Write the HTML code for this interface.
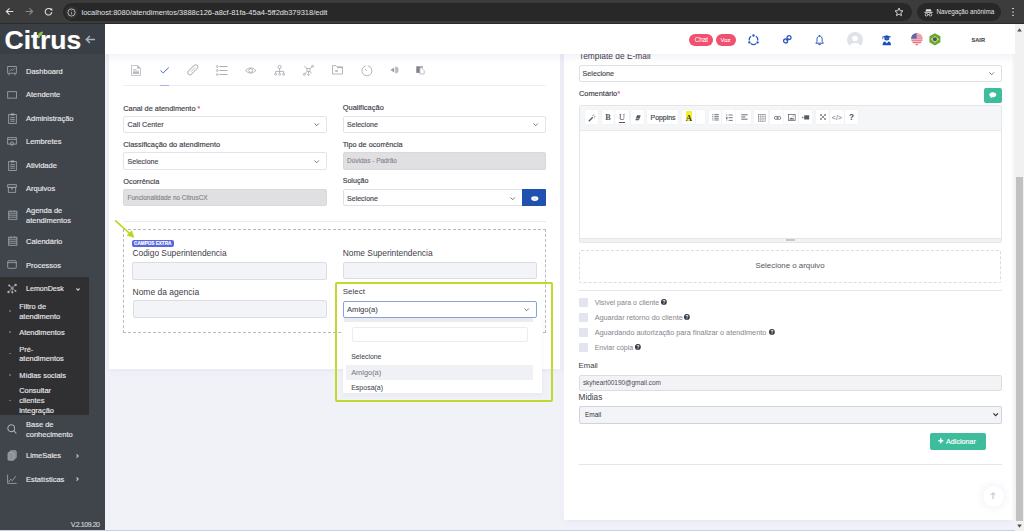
<!DOCTYPE html>
<html><head><meta charset="utf-8">
<style>
*{box-sizing:border-box;margin:0;padding:0}
html,body{width:1024px;height:531px;overflow:hidden;background:#f1f2f8;font-family:"Liberation Sans",sans-serif;position:relative}
.a{position:absolute}
.t{position:absolute;white-space:nowrap;line-height:1;-webkit-text-stroke:0.15px currentColor}
svg.a{overflow:visible}

</style></head><body>
<div class="a" style="left:0px;top:0px;width:1024px;height:24px;background:#3c3c3c"></div>
<div class="a" style="left:0px;top:23px;width:1024px;height:1px;background:#2c2c2c"></div>
<svg class="a" style="left:5px;top:7px;" width="9" height="9" viewBox="0 0 9 9"><path d="M8.3 4.5H1.4M4.5 1.3L1.3 4.5 4.5 7.7" fill="none" stroke="#e0e0e0" stroke-width="1.1"/></svg>
<svg class="a" style="left:24.5px;top:7px;" width="9" height="9" viewBox="0 0 9 9"><path d="M0.7 4.5H7.6M4.5 1.3L7.7 4.5 4.5 7.7" fill="none" stroke="#8a8a8a" stroke-width="1.1"/></svg>
<svg class="a" style="left:44px;top:7px;" width="9" height="9" viewBox="0 0 9 9"><path d="M7.5 3.3A3.3 3.3 0 1 0 7.8 5.2" fill="none" stroke="#e0e0e0" stroke-width="1.1"/><path d="M5.6 1.4L8.3 1.4 8.3 4.1Z" fill="#e0e0e0"/></svg>
<div class="a" style="left:63px;top:3px;width:849px;height:18px;border-radius:9px;background:#282828"></div>
<div class="a" style="left:65px;top:5.5px;width:13px;height:13px;border-radius:7px;background:#323232"></div>
<svg class="a" style="left:67px;top:7.5px;" width="9" height="9" viewBox="0 0 9 9"><circle cx="4.5" cy="4.5" r="3.6" fill="none" stroke="#c8c8c8" stroke-width="0.85"/><path d="M4.5 3.9V6.5" stroke="#b0b0b0" stroke-width="0.8"/><circle cx="4.5" cy="2.7" r="0.45" fill="#b0b0b0"/></svg>
<div class="t" style="left:81.5px;top:8.6px;font-size:7.5px;color:#e3e3e3;-webkit-text-stroke:0">localhost<span>:8080/atendimentos/3888c126-a8cf-81fa-45a4-5ff2db379318/edit</span></div>
<svg class="a" style="left:894px;top:7px;" width="10" height="10" viewBox="0 0 10 10"><path d="M5 1L6.1 3.7 9 3.9 6.8 5.8 7.5 8.7 5 7.1 2.5 8.7 3.2 5.8 1 3.9 3.9 3.7Z" fill="none" stroke="#e0e0e0" stroke-width="0.9" stroke-linejoin="round"/></svg>
<div class="a" style="left:917px;top:3px;width:84px;height:18px;border-radius:9px;background:#282828"></div>
<svg class="a" style="left:924px;top:7.5px;" width="9" height="9" viewBox="0 0 9 9"><path d="M2.2 1.2H6.8L7.6 3.6H1.4Z" fill="#e0e0e0"/><rect x="0.4" y="3.9" width="8.2" height="0.9" fill="#e0e0e0"/><circle cx="2.5" cy="6.7" r="1.3" fill="none" stroke="#e0e0e0" stroke-width="0.85"/><circle cx="6.5" cy="6.7" r="1.3" fill="none" stroke="#e0e0e0" stroke-width="0.85"/><path d="M3.9 6.5H5.1" stroke="#e0e0e0" stroke-width="0.7"/></svg>
<div class="t" style="left:936.5px;top:8.6px;font-size:6.3px;color:#e3e3e3;-webkit-text-stroke:0">Navegação anônima</div>
<div class="a" style="left:1012.2px;top:7.6px;width:1.8px;height:1.8px;border-radius:1px;background:#dcdcdc;box-shadow:0 3.4px 0 #dcdcdc,0 6.8px 0 #dcdcdc"></div>

<div class="a" style="left:0px;top:24px;width:105px;height:507px;background:#40444b"></div>
<div class="a" style="left:0px;top:24px;width:105px;height:30px;background:#3a3e45"></div>
<div class="t" style="left:4.6px;top:26.7px;font-size:26.5px;font-weight:700;color:#fff">Citrus</div>
<svg class="a" style="left:37px;top:31px;" width="6.5" height="6.5" viewBox="0 0 6.5 6.5"><path d="M0.6 6C0.6 3 2.6 0.8 6 0.5 5.9 3.6 4 5.8 0.6 6Z" fill="#8cc63f"/></svg>
<svg class="a" style="left:85px;top:34.5px;" width="10.5" height="9" viewBox="0 0 10.5 9"><path d="M10 4.5H1.3M4.9 1L1.3 4.5 4.9 8" fill="none" stroke="#a7b0bc" stroke-width="1.5"/></svg>
<div class="t" style="left:26.00px;top:67.88px;font-size:7.5px;color:#e6e7ea;font-weight:400;">Dashboard</div>
<div class="t" style="left:26.00px;top:91.18px;font-size:7.5px;color:#e6e7ea;font-weight:400;">Atendente</div>
<div class="t" style="left:26.00px;top:114.78px;font-size:7.5px;color:#e6e7ea;font-weight:400;">Administração</div>
<div class="t" style="left:26.00px;top:138.18px;font-size:7.5px;color:#e6e7ea;font-weight:400;">Lembretes</div>
<div class="t" style="left:26.00px;top:161.97px;font-size:7.5px;color:#e6e7ea;font-weight:400;">Atividade</div>
<div class="t" style="left:26.00px;top:185.18px;font-size:7.5px;color:#e6e7ea;font-weight:400;">Arquivos</div>
<div class="t" style="left:26.00px;top:206.78px;font-size:7.5px;color:#e6e7ea;font-weight:400;">Agenda de</div>
<div class="t" style="left:26.00px;top:216.58px;font-size:7.5px;color:#e6e7ea;font-weight:400;">atendimentos</div>
<div class="t" style="left:26.00px;top:238.08px;font-size:7.5px;color:#e6e7ea;font-weight:400;">Calendário</div>
<div class="t" style="left:26.00px;top:261.77px;font-size:7.5px;color:#e6e7ea;font-weight:400;">Processos</div>
<svg class="a" style="left:7px;top:66px;" width="10" height="10" viewBox="0 0 10 10"><rect x="0.7" y="0.6" width="8.6" height="6.6" fill="none" stroke="#a6aab3" stroke-width="0.8"/><path d="M2.2 5.4L4.2 3.4 5.4 4.4 7.6 2.2" fill="none" stroke="#a6aab3" stroke-width="0.8"/><path d="M2.5 7.3L1.8 9.4M7.5 7.3L8.2 9.4" fill="none" stroke="#a6aab3" stroke-width="0.8"/></svg>
<svg class="a" style="left:7px;top:90.5px;" width="10" height="8" viewBox="0 0 10 8"><rect x="0.7" y="0.7" width="8.8" height="6.4" fill="none" stroke="#a6aab3" stroke-width="0.8"/></svg>
<svg class="a" style="left:8px;top:113px;" width="9" height="11" viewBox="0 0 9 11"><rect x="0.7" y="1.6" width="7.6" height="8.8" fill="none" stroke="#a6aab3" stroke-width="0.8"/><rect x="2.8" y="0.5" width="3.4" height="2" fill="#a6aab3"/><path d="M2.2 4.6H6.8M2.2 6.4H6.8M2.2 8.2H6.8" fill="none" stroke="#a6aab3" stroke-width="0.8"/></svg>
<svg class="a" style="left:7px;top:136.5px;" width="10" height="9" viewBox="0 0 10 9"><rect x="0.7" y="0.7" width="8.6" height="6.4" fill="none" stroke="#a6aab3" stroke-width="0.8"/><path d="M0.7 2.4H9.3" fill="none" stroke="#a6aab3" stroke-width="0.8"/><circle cx="5" cy="6.6" r="1.7" fill="none" stroke="#a6aab3" stroke-width="0.8"/></svg>
<svg class="a" style="left:8px;top:160px;" width="9" height="11" viewBox="0 0 9 11"><rect x="0.7" y="1.6" width="7.6" height="8.8" fill="none" stroke="#a6aab3" stroke-width="0.8"/><rect x="2.8" y="0.5" width="3.4" height="2" fill="#a6aab3"/><path d="M2.2 4.6H6.8M2.2 6.4H6.8M2.2 8.2H6.8" fill="none" stroke="#a6aab3" stroke-width="0.8"/></svg>
<svg class="a" style="left:7px;top:183.5px;" width="10" height="9" viewBox="0 0 10 9"><rect x="0.7" y="0.7" width="8.6" height="2.6" fill="none" stroke="#a6aab3" stroke-width="0.8"/><rect x="1.3" y="3.3" width="7.4" height="5" fill="none" stroke="#a6aab3" stroke-width="0.8"/><path d="M4 4.9H6" stroke="#a6aab3" stroke-width="1"/></svg>
<svg class="a" style="left:7.5px;top:210px;" width="9.5" height="10" viewBox="0 0 9.5 10"><rect x="0.7" y="1.2" width="8.2" height="8.1" fill="none" stroke="#a6aab3" stroke-width="0.8"/><path d="M0.7 3.2H8.9M0.7 5.2H8.9M0.7 7.2H8.9" fill="none" stroke="#a6aab3" stroke-width="0.8"/><path d="M3 0.3V1.8M6.5 0.3V1.8" fill="none" stroke="#a6aab3" stroke-width="0.8"/></svg>
<svg class="a" style="left:7.5px;top:236px;" width="9.5" height="10" viewBox="0 0 9.5 10"><rect x="0.7" y="1.2" width="8.2" height="8.1" fill="none" stroke="#a6aab3" stroke-width="0.8"/><path d="M0.7 3.2H8.9M0.7 5.2H8.9M0.7 7.2H8.9" fill="none" stroke="#a6aab3" stroke-width="0.8"/><path d="M3 0.3V1.8M6.5 0.3V1.8" fill="none" stroke="#a6aab3" stroke-width="0.8"/></svg>
<svg class="a" style="left:7px;top:259.5px;" width="10" height="9" viewBox="0 0 10 9"><rect x="0.7" y="0.7" width="8.6" height="7.6" rx="1" fill="none" stroke="#a6aab3" stroke-width="0.8"/><path d="M0.7 2.6H9.3" fill="none" stroke="#a6aab3" stroke-width="0.8"/></svg>
<div class="a" style="left:0px;top:277px;width:89px;height:138px;background:#303032"></div>
<svg class="a" style="left:7px;top:283.5px;" width="10" height="10" viewBox="0 0 10 10"><path d="M5.2 4L2.5 1.6M5.2 4L8.5 0.9M5.2 4L1.6 7.9M5.2 4L5.3 8.2M5.2 4L8.4 6.9" stroke="#a6aab3" stroke-width="0.7"/><circle cx="5.2" cy="4" r="1.1" fill="none" stroke="#a6aab3" stroke-width="0.7"/><circle cx="2.3" cy="1.5" r="1.1" fill="#b4b8c6"/><circle cx="8.6" cy="0.9" r="1.2" fill="#b8a9b8"/><circle cx="1.5" cy="8" r="1.2" fill="#a9a9c4"/><circle cx="5.3" cy="8.3" r="1.1" fill="#b0a9b4"/><circle cx="8.5" cy="6.9" r="0.9" fill="#b4b8c6"/></svg>
<div class="t" style="left:26.00px;top:285.85px;font-size:7.1px;color:#e6e7ea;font-weight:400;">LemonDesk</div>
<svg class="a" style="left:75.5px;top:287.5px;" width="4" height="3" viewBox="0 0 4 3"><path d="M0.4 0.5L2 2.2 3.6 0.5" fill="none" stroke="#c4c7cd" stroke-width="1.1"/></svg>
<div class="t" style="left:19.20px;top:302.90px;font-size:7.45px;color:#e6e7ea;font-weight:400;">Filtro de</div>
<div class="t" style="left:19.20px;top:312.50px;font-size:7.45px;color:#e6e7ea;font-weight:400;">atendimento</div>
<div class="t" style="left:19.20px;top:328.90px;font-size:7.45px;color:#e6e7ea;font-weight:400;">Atendimentos</div>
<div class="t" style="left:19.20px;top:345.80px;font-size:7.45px;color:#e6e7ea;font-weight:400;">Pré-</div>
<div class="t" style="left:19.20px;top:355.10px;font-size:7.45px;color:#e6e7ea;font-weight:400;">atendimentos</div>
<div class="t" style="left:19.20px;top:371.80px;font-size:7.45px;color:#e6e7ea;font-weight:400;">Mídias sociais</div>
<div class="t" style="left:19.20px;top:387.30px;font-size:7.45px;color:#e6e7ea;font-weight:400;">Consultar</div>
<div class="t" style="left:19.20px;top:397.20px;font-size:7.45px;color:#e6e7ea;font-weight:400;">clientes</div>
<div class="t" style="left:19.20px;top:406.50px;font-size:7.45px;color:#e6e7ea;font-weight:400;">integração</div>
<div class="a" style="left:9.2px;top:310.3px;width:1.4px;height:1.4px;border-radius:1px;background:#6f7391"></div>
<div class="a" style="left:9.2px;top:331.40000000000003px;width:1.4px;height:1.4px;border-radius:1px;background:#6f7391"></div>
<div class="a" style="left:9.2px;top:353.1px;width:1.4px;height:1.4px;border-radius:1px;background:#6f7391"></div>
<div class="a" style="left:9.2px;top:374.3px;width:1.4px;height:1.4px;border-radius:1px;background:#6f7391"></div>
<div class="a" style="left:9.2px;top:399.7px;width:1.4px;height:1.4px;border-radius:1px;background:#6f7391"></div>
<svg class="a" style="left:7px;top:423.5px;" width="10" height="10" viewBox="0 0 10 10"><circle cx="4.2" cy="4.2" r="3.4" fill="none" stroke="#a6aab3" stroke-width="1.05"/><path d="M6.7 6.7L9.3 9.3" stroke="#a6aab3" stroke-width="1.05"/></svg>
<div class="t" style="left:26.00px;top:421.47px;font-size:7.5px;color:#e6e7ea;font-weight:400;">Base de</div>
<div class="t" style="left:26.00px;top:430.97px;font-size:7.5px;color:#e6e7ea;font-weight:400;">conhecimento</div>
<svg class="a" style="left:7px;top:450px;" width="10" height="11" viewBox="0 0 10 11"><rect x="3" y="0.7" width="6.2" height="7.6" rx="1" fill="#7e838c" stroke="#a6aab3" stroke-width="0.8"/><rect x="1" y="2.4" width="6.2" height="7.8" rx="1" fill="#8d9199" stroke="#a6aab3" stroke-width="0.8"/></svg>
<div class="t" style="left:26.00px;top:452.17px;font-size:7.5px;color:#e6e7ea;font-weight:400;">LimeSales</div>
<svg class="a" style="left:76px;top:453.5px;" width="3" height="4" viewBox="0 0 3 4"><path d="M0.5 0.4L2.2 2 0.5 3.6" fill="none" stroke="#c4c7cd" stroke-width="1.1"/></svg>
<svg class="a" style="left:7px;top:473.5px;" width="10" height="10" viewBox="0 0 10 10"><path d="M0.6 0.5V9.4H9.6" fill="none" stroke="#a6aab3" stroke-width="0.8"/><path d="M1.5 8L3.6 5.3 5.3 6.6 8.8 2.2" fill="none" stroke="#a6aab3" stroke-width="0.8"/></svg>
<div class="t" style="left:26.00px;top:475.67px;font-size:7.5px;color:#e6e7ea;font-weight:400;">Estatísticas</div>
<svg class="a" style="left:76px;top:477px;" width="3" height="4" viewBox="0 0 3 4"><path d="M0.5 0.4L2.2 2 0.5 3.6" fill="none" stroke="#c4c7cd" stroke-width="1.1"/></svg>
<div class="t" style="left:70.80px;top:520.99px;font-size:7px;color:#cfd1d6;font-weight:400;letter-spacing:-0.45px">V.2.109.20</div>
<div class="a" style="left:0px;top:529.5px;width:1024px;height:1.5px;background:#c9cfe0"></div>

<div class="a" style="left:109px;top:54px;width:451px;height:315.4px;background:#fff;box-shadow:0 2px 6px rgba(100,100,210,.07)"></div>
<svg class="a" style="left:131px;top:65px;" width="10" height="11" viewBox="0 0 10 11"><path d="M0.5 0.5H6.6L9.5 3.4V10.5H0.5Z" fill="#fff" stroke="#b4b6bd" stroke-width="0.8"/><path d="M6.4 0.5V3.6H9.5Z" fill="#a9abb3"/><path d="M2 4.7H5.5M2 6.2H8" stroke="#a9abb3" stroke-width="0.8"/><rect x="1.9" y="7.2" width="6.2" height="1.6" fill="#a9abb3"/></svg>
<svg class="a" style="left:159.8px;top:67.2px;" width="9.2" height="6.6" viewBox="0 0 9.2 6.6"><path d="M0.5 3.4L3.2 6 8.8 0.5" fill="none" stroke="#3f5fc8" stroke-width="0.95"/></svg>
<svg class="a" style="left:187px;top:64.4px;" width="11.6" height="11.6" viewBox="0 0 11.6 11.6"><g transform="rotate(45 5.8 5.8)"><rect x="3.6" y="-0.4" width="4.4" height="12.4" rx="2.2" fill="none" stroke="#b3b5bd" stroke-width="0.95"/><path d="M5.8 2.4V8.4" stroke="#b3b5bd" stroke-width="0.9"/></g></svg>
<svg class="a" style="left:215.5px;top:65px;" width="12" height="11" viewBox="0 0 12 11"><circle cx="1.3" cy="1.5" r="0.9" fill="none" stroke="#a3a5ad" stroke-width="0.8"/><circle cx="1.3" cy="5.5" r="0.9" fill="none" stroke="#a3a5ad" stroke-width="0.8"/><circle cx="1.3" cy="9.5" r="0.9" fill="none" stroke="#a3a5ad" stroke-width="0.8"/><path d="M3.4 1.5H11.6M3.4 5.5H11.6M3.4 9.5H11.6" stroke="#a3a5ad" stroke-width="0.9"/></svg>
<svg class="a" style="left:245px;top:67px;" width="11.4" height="7" viewBox="0 0 11.4 7"><path d="M0.5 3.5Q5.7 -1.8 10.9 3.5 5.7 8.8 0.5 3.5Z" fill="none" stroke="#a3a5ad" stroke-width="0.8"/><circle cx="5.7" cy="3.5" r="1.9" fill="none" stroke="#a3a5ad" stroke-width="0.8"/></svg>
<svg class="a" style="left:273.8px;top:65px;" width="11.2" height="11" viewBox="0 0 11.2 11"><circle cx="5.6" cy="2" r="1.6" fill="none" stroke="#a3a5ad" stroke-width="0.8"/><path d="M5.6 3.6V6.4M1.6 8.4V6.4H9.6V8.4M5.6 6.4V8.4" fill="none" stroke="#a3a5ad" stroke-width="0.8"/><circle cx="1.6" cy="9.3" r="1" fill="none" stroke="#a3a5ad" stroke-width="0.8"/><circle cx="5.6" cy="9.3" r="1" fill="none" stroke="#a3a5ad" stroke-width="0.8"/><circle cx="9.6" cy="9.3" r="1" fill="none" stroke="#a3a5ad" stroke-width="0.8"/></svg>
<svg class="a" style="left:303.2px;top:65px;" width="11.2" height="11" viewBox="0 0 11.2 11"><rect x="4" y="3.6" width="3" height="3" fill="none" stroke="#a3a5ad" stroke-width="0.8"/><path d="M4 3.6L1.4 1.4M7 3.6L9.2 1.6M4 6.6L1.6 9.2M7 6.6L8.6 8.4M5.5 6.6V8.8" fill="none" stroke="#a3a5ad" stroke-width="0.8"/><circle cx="9.6" cy="1.3" r="1" fill="none" stroke="#a3a5ad" stroke-width="0.8"/><circle cx="1.3" cy="9.4" r="1" fill="none" stroke="#a3a5ad" stroke-width="0.8"/><circle cx="5.5" cy="9.6" r="0.8" fill="none" stroke="#a3a5ad" stroke-width="0.8"/></svg>
<svg class="a" style="left:332.2px;top:65.4px;" width="11" height="9.6" viewBox="0 0 11 9.6"><path d="M0.5 0.6H4L5 1.8H10.5V9H0.5Z" fill="none" stroke="#a3a5ad" stroke-width="0.8"/><path d="M5 2.6H10.5" stroke="#a3a5ad" stroke-width="0.9"/><rect x="3.2" y="5" width="2.6" height="1.8" fill="#a3a5ad" opacity=".8"/></svg>
<svg class="a" style="left:361px;top:64.6px;" width="11.4" height="11.4" viewBox="0 0 11.4 11.4"><path d="M6.9 0.9A5 5 0 1 1 4.6 1" fill="none" stroke="#a3a5ad" stroke-width="0.8"/><path d="M5.7 5.7L4.3 4" stroke="#a3a5ad" stroke-width="1"/></svg>
<svg class="a" style="left:389.6px;top:66.4px;" width="9" height="8" viewBox="0 0 9 8"><path d="M0.4 4L4.2 1.4V6.6Z" fill="#9d9fa8"/><path d="M5.2 0.6A3.4 3.4 0 0 1 5.2 7.4Z" fill="#b9bbc3"/></svg>
<svg class="a" style="left:415.8px;top:66.4px;" width="8.6" height="8.4" viewBox="0 0 8.6 8.4"><rect x="0.3" y="0.3" width="3.6" height="6.6" fill="#7f818b"/><rect x="3.9" y="0.3" width="3" height="1.4" fill="#8f919b"/><path d="M3.9 1.9H5.6L8.2 4.5V8H3.9Z" fill="#fff" stroke="#a6a8b0" stroke-width="0.7"/></svg>
<div class="a" style="left:123px;top:85.4px;width:423px;height:0.8px;background:#efeff3"></div>
<div class="a" style="left:159.8px;top:84.9px;width:9px;height:1.6px;background:#aab2ee"></div>
<div class="t" style="left:123.20px;top:104.52px;font-size:7.4px;color:#3c3d47;font-weight:400;">Canal de atendimento</div>
<div class="t" style="left:197.60px;top:106.48px;font-size:6.8px;color:#f24a5b;font-weight:400;">*</div>
<div class="a" style="left:123.2px;top:116.2px;width:203.4px;height:16.7px;background:#fff;border:1px solid #e3e4e8;border-radius:2px;"></div>
<div class="t" style="left:127.60px;top:121.30px;font-size:7.2px;color:#484850;font-weight:400;">Call Center</div>
<svg class="a" style="left:313.8px;top:122.9px;" width="5.4" height="3.2" viewBox="0 0 5.4 3.2"><path d="M0.5 0.5L2.7 2.7 4.9 0.5" fill="none" stroke="#6a6a70" stroke-width="0.9"/></svg>
<div class="t" style="left:342.70px;top:104.49px;font-size:7.47px;color:#3c3d47;font-weight:400;">Qualificação</div>
<div class="a" style="left:342.7px;top:116.3px;width:203.3px;height:16.6px;background:#fff;border:1px solid #e3e4e8;border-radius:2px;"></div>
<div class="t" style="left:347.10px;top:121.39px;font-size:7.0px;color:#484850;font-weight:400;">Selecione</div>
<svg class="a" style="left:533.4px;top:122.9px;" width="5.4" height="3.2" viewBox="0 0 5.4 3.2"><path d="M0.5 0.5L2.7 2.7 4.9 0.5" fill="none" stroke="#6a6a70" stroke-width="0.9"/></svg>
<div class="t" style="left:123.20px;top:141.21px;font-size:7.43px;color:#3c3d47;font-weight:400;">Classificação do atendimento</div>
<div class="a" style="left:123.2px;top:152.4px;width:203.4px;height:17.3px;background:#fff;border:1px solid #e3e4e8;border-radius:2px;"></div>
<div class="t" style="left:127.60px;top:157.99px;font-size:7.0px;color:#484850;font-weight:400;">Selecione</div>
<svg class="a" style="left:313.8px;top:159.6px;" width="5.4" height="3.2" viewBox="0 0 5.4 3.2"><path d="M0.5 0.5L2.7 2.7 4.9 0.5" fill="none" stroke="#6a6a70" stroke-width="0.9"/></svg>
<div class="t" style="left:342.70px;top:141.27px;font-size:7.28px;color:#3c3d47;font-weight:400;">Tipo de ocorrência</div>
<div class="a" style="left:342.7px;top:152.4px;width:203.3px;height:17.3px;background:#e0e0e2;border:1px solid #d9d9dc;border-radius:2px;"></div>
<div class="t" style="left:347.10px;top:157.82px;font-size:6.46px;color:#8a8a90;font-weight:400;">Dúvidas - Padrão</div>
<div class="t" style="left:123.20px;top:178.02px;font-size:7.4px;color:#3c3d47;font-weight:400;">Ocorrência</div>
<div class="a" style="left:123.2px;top:189.2px;width:203.4px;height:17.3px;background:#e0e0e2;border:1px solid #d9d9dc;border-radius:2px;"></div>
<div class="t" style="left:127.60px;top:194.74px;font-size:6.43px;color:#85858b;font-weight:400;">Funcionalidade no CitrusCX</div>
<div class="t" style="left:342.70px;top:178.05px;font-size:7.1px;color:#3c3d47;font-weight:400;">Solução</div>
<div class="a" style="left:342.7px;top:189.2px;width:180px;height:17px;background:#fff;border:1px solid #dfe0e4;border-radius:2px;border-radius:2px 0 0 2px"></div>
<div class="t" style="left:347.10px;top:194.79px;font-size:7.0px;color:#484850;font-weight:400;">Selecione</div>
<svg class="a" style="left:510px;top:196.9px;" width="5.4" height="3.2" viewBox="0 0 5.4 3.2"><path d="M0.5 0.5L2.7 2.7 4.9 0.5" fill="none" stroke="#6a6a70" stroke-width="0.9"/></svg>
<div class="a" style="left:522.3px;top:189.2px;width:24.1px;height:16.9px;background:#2050b0;border-radius:0 1px 1px 0"></div>
<svg class="a" style="left:530.8px;top:195.8px;" width="7.6" height="5.2" viewBox="0 0 7.6 5.2"><ellipse cx="3.8" cy="2.6" rx="3.6" ry="2.4" fill="#fff"/><ellipse cx="3.8" cy="2.6" rx="1.3" ry="1.2" fill="#c9d4ee"/><circle cx="3.8" cy="2.4" r="0.6" fill="#fff"/></svg>
<div class="a" style="left:123px;top:221.4px;width:423px;height:0.8px;background:#ebebef"></div>
<div class="a" style="left:123.4px;top:229.1px;width:422.2px;height:104.2px;border:1px dashed #b9b9be"></div>
<div class="a" style="left:131.9px;top:240.1px;width:42px;height:7.4px;background:#5867dd;border-radius:2px"></div>
<div class="t" style="left:134.10px;top:241.90px;font-size:4.64px;color:#fff;font-weight:700;">CAMPOS EXTRA</div>
<div class="t" style="left:132.50px;top:249.49px;font-size:8.4px;color:#3f404a;font-weight:400;-webkit-text-stroke:0">Codigo Superintendencia</div>
<div class="a" style="left:132.2px;top:262.3px;width:194.4px;height:17.4px;background:#f3f4f7;border:1px solid #dcdde2;border-radius:2px;"></div>
<div class="t" style="left:342.70px;top:249.49px;font-size:8.4px;color:#3f404a;font-weight:400;-webkit-text-stroke:0">Nome Superintendencia</div>
<div class="a" style="left:342.7px;top:262.1px;width:194.1px;height:17.4px;background:#f3f4f7;border:1px solid #dcdde2;border-radius:2px;"></div>
<div class="t" style="left:132.50px;top:287.75px;font-size:8.5px;color:#3f404a;font-weight:400;-webkit-text-stroke:0">Nome da agencia</div>
<div class="a" style="left:132.5px;top:300.4px;width:194.1px;height:17.3px;background:#f3f4f7;border:1px solid #dcdde2;border-radius:2px;"></div>
<div class="t" style="left:342.70px;top:288.36px;font-size:8.0px;color:#3f404a;font-weight:400;-webkit-text-stroke:0">Select</div>
<div class="a" style="left:342.7px;top:300.5px;width:194.1px;height:17.5px;background:#fff;border:1px solid #87a3dc;border-radius:2px;"></div>
<div class="t" style="left:347.00px;top:306.33px;font-size:7.6px;color:#3c3d47;font-weight:400;-webkit-text-stroke:0.05px currentColor">Amigo(a)</div>
<svg class="a" style="left:523.8px;top:308.4px;" width="5.4" height="3.2" viewBox="0 0 5.4 3.2"><path d="M0.5 0.5L2.7 2.7 4.9 0.5" fill="none" stroke="#6a6a70" stroke-width="0.9"/></svg>
<div class="a" style="left:342.5px;top:318px;width:199.3px;height:75.2px;background:#fff;box-shadow:0 2px 4px rgba(60,60,120,.06)"></div>
<div class="a" style="left:343.5px;top:318px;width:189.6px;height:3.6px;background:#ececf0"></div>
<div class="a" style="left:351.6px;top:327px;width:176.5px;height:14.5px;background:#fff;border:1px solid #ececf0;border-radius:2px"></div>
<div class="t" style="left:351.20px;top:354.33px;font-size:6.9px;color:#44454d;font-weight:400;-webkit-text-stroke:0.05px currentColor">Selecione</div>
<div class="a" style="left:346.3px;top:364.6px;width:186.8px;height:15.2px;background:#f0f1f4"></div>
<div class="t" style="left:351.20px;top:369.12px;font-size:7.4px;color:#7a7b83;font-weight:400;-webkit-text-stroke:0.05px currentColor">Amigo(a)</div>
<div class="t" style="left:351.20px;top:383.89px;font-size:7.0px;color:#44454d;font-weight:400;-webkit-text-stroke:0.05px currentColor">Esposa(a)</div>
<div class="a" style="left:334.7px;top:282.4px;width:218.8px;height:119.8px;border:2px solid #c2d82c;border-radius:2px"></div>
<svg class="a" style="left:113px;top:218px;" width="24" height="22" viewBox="0 0 24 22"><path d="M2.6 2.8L18.4 17" stroke="#bcd41e" stroke-width="1.6" stroke-linecap="round"/><path d="M21.4 19.8L13.6 17.4 18.8 12.2Z" fill="#bcd41e"/></svg>

<div class="a" style="left:564px;top:54px;width:448px;height:466px;background:#fff;box-shadow:0 2px 6px rgba(100,100,210,.07)"></div>
<div class="a" style="left:1012px;top:54px;width:3px;height:466px;background:linear-gradient(90deg,#f9f9fc,#f4f4f9)"></div>
<div class="t" style="left:579.00px;top:52.09px;font-size:8.4px;color:#3c3d47;font-weight:400;-webkit-text-stroke:0">Template de E-mail</div>
<div class="a" style="left:578.6px;top:64.6px;width:423.1px;height:17.2px;background:#fff;border:1px solid #dfe0e4;border-radius:2px"></div>
<div class="t" style="left:582.60px;top:70.63px;font-size:7.15px;color:#484850;font-weight:400;">Selecione</div>
<svg class="a" style="left:988.6px;top:72.4px;" width="5.4" height="3.2" viewBox="0 0 5.4 3.2"><path d="M0.4 0.4L2.7 2.7 5 0.4" fill="none" stroke="#6a6a70" stroke-width="0.9"/></svg>
<div class="t" style="left:579.00px;top:89.82px;font-size:7.4px;color:#3c3d47;font-weight:400;">Comentário</div>
<div class="t" style="left:617.40px;top:91.28px;font-size:6.8px;color:#f24a5b;font-weight:400;">*</div>
<div class="a" style="left:984.2px;top:88px;width:17.5px;height:14.7px;background:#3dbd9b;border-radius:2px"></div>
<svg class="a" style="left:989.2px;top:92px;" width="7.6" height="6.4" viewBox="0 0 7.6 6.4"><path d="M3.8 0.3C5.9 0.3 7.3 1.4 7.3 2.8 7.3 4.2 5.9 5.3 3.8 5.3L3.3 5.3 1.4 6.2 1.9 4.9C0.9 4.4 0.3 3.7 0.3 2.8 0.3 1.4 1.7 0.3 3.8 0.3Z" fill="#fff"/></svg>
<div class="a" style="left:578.6px;top:105.4px;width:423.1px;height:137.6px;background:#fff;border:1px solid #e5e5ea;border-radius:2px"></div>
<div class="a" style="left:579.6px;top:106.4px;width:421.1px;height:24.4px;background:#f5f6f8;border-bottom:1px solid #e9e9ee"></div>
<div class="a" style="left:579.6px;top:238px;width:421.1px;height:4px;background:#f2f2f4;border-top:1px solid #e6e6ea"></div>
<div class="a" style="left:785.5px;top:239.4px;width:9px;height:2px;background:#c9c9cc"></div>
<div class="a" style="left:585px;top:110.2px;width:12.899999999999954px;height:14.3px;background:#fff;border-radius:1.5px;box-shadow:0 0 0 0.5px #f0f0f3"></div>
<div class="a" style="left:601.5px;top:110.2px;width:12.899999999999954px;height:14.3px;background:#fff;border-radius:1.5px;box-shadow:0 0 0 0.5px #f0f0f3"></div>
<div class="a" style="left:615px;top:110.2px;width:13.999999999999977px;height:14.3px;background:#fff;border-radius:1.5px;box-shadow:0 0 0 0.5px #f0f0f3"></div>
<div class="a" style="left:631.2px;top:110.2px;width:12.399999999999954px;height:14.3px;background:#fff;border-radius:1.5px;box-shadow:0 0 0 0.5px #f0f0f3"></div>
<div class="a" style="left:646.6px;top:110.2px;width:31.899999999999956px;height:14.3px;background:#fff;border-radius:1.5px;box-shadow:0 0 0 0.5px #f0f0f3"></div>
<div class="a" style="left:682px;top:110.2px;width:13.200000000000022px;height:14.3px;background:#fff;border-radius:1.5px;box-shadow:0 0 0 0.5px #f0f0f3"></div>
<div class="a" style="left:695.6px;top:110.2px;width:9.700000000000022px;height:14.3px;background:#fff;border-radius:1.5px;box-shadow:0 0 0 0.5px #f0f0f3"></div>
<div class="a" style="left:709px;top:110.2px;width:12.399999999999954px;height:14.3px;background:#fff;border-radius:1.5px;box-shadow:0 0 0 0.5px #f0f0f3"></div>
<div class="a" style="left:721.8px;top:110.2px;width:14.200000000000022px;height:14.3px;background:#fff;border-radius:1.5px;box-shadow:0 0 0 0.5px #f0f0f3"></div>
<div class="a" style="left:736.4px;top:110.2px;width:14.700000000000022px;height:14.3px;background:#fff;border-radius:1.5px;box-shadow:0 0 0 0.5px #f0f0f3"></div>
<div class="a" style="left:754.1px;top:110.2px;width:13.499999999999977px;height:14.3px;background:#fff;border-radius:1.5px;box-shadow:0 0 0 0.5px #f0f0f3"></div>
<div class="a" style="left:770px;top:110.2px;width:13.6px;height:14.3px;background:#fff;border-radius:1.5px;box-shadow:0 0 0 0.5px #f0f0f3"></div>
<div class="a" style="left:784px;top:110.2px;width:14.1px;height:14.3px;background:#fff;border-radius:1.5px;box-shadow:0 0 0 0.5px #f0f0f3"></div>
<div class="a" style="left:798.5px;top:110.2px;width:13.800000000000045px;height:14.3px;background:#fff;border-radius:1.5px;box-shadow:0 0 0 0.5px #f0f0f3"></div>
<div class="a" style="left:815.9px;top:110.2px;width:13.200000000000022px;height:14.3px;background:#fff;border-radius:1.5px;box-shadow:0 0 0 0.5px #f0f0f3"></div>
<div class="a" style="left:829.5px;top:110.2px;width:14.700000000000022px;height:14.3px;background:#fff;border-radius:1.5px;box-shadow:0 0 0 0.5px #f0f0f3"></div>
<div class="a" style="left:844.6px;top:110.2px;width:13.299999999999931px;height:14.3px;background:#fff;border-radius:1.5px;box-shadow:0 0 0 0.5px #f0f0f3"></div>
<svg class="a" style="left:588px;top:113.6px;" width="8" height="8" viewBox="0 0 8 8"><path d="M0.8 7.2L4.8 3.2" stroke="#5a5b61" stroke-width="1.3"/><path d="M5.6 0.4V1.6M7.4 2.4H6.2M4 1L4.6 1.6M7 4.2L6.4 3.6" stroke="#5a5b61" stroke-width="0.6"/></svg>
<div class="t" style="left:605.2px;top:113.8px;font-size:8.2px;font-family:'Liberation Serif';font-weight:700;color:#55565c;-webkit-text-stroke:0">B</div>
<div class="t" style="left:619px;top:113.8px;font-size:8.2px;font-family:'Liberation Serif';font-weight:400;color:#55565c;-webkit-text-stroke:0.1px currentColor">U</div>
<div class="a" style="left:619.2px;top:121.9px;width:6.2px;height:0.7px;background:#55565c"></div>
<svg class="a" style="left:635.2px;top:114.6px;" width="6" height="5.6" viewBox="0 0 6 5.6"><path d="M2 0.3H5.7L4 5.3H0.3Z" fill="#5a5b61"/><path d="M0.8 3.7H4.6" stroke="#fff" stroke-width="0.5"/></svg>
<div class="t" style="left:650.50px;top:114.61px;font-size:6.95px;color:#3c3d47;font-weight:400;">Poppins</div>
<div class="a" style="left:685.5px;top:111.4px;width:6.8px;height:9.9px;background:#f6f12f"></div>
<div class="t" style="left:685.8px;top:113.5px;font-size:8.6px;font-family:'Liberation Serif';font-weight:700;color:#3a3b42;-webkit-text-stroke:0">A</div>
<svg class="a" style="left:711.8px;top:114px;" width="7" height="6.6" viewBox="0 0 7 6.6"><path d="M0.3 0.6H1.3M0.3 2.4H1.3M0.3 4.2H1.3M0.3 6H1.3" stroke="#5a5b61" stroke-width="0.8"/><path d="M2.3 0.6H6.8M2.3 2.4H6.8M2.3 4.2H6.8M2.3 6H6.8" stroke="#5a5b61" stroke-width="0.8"/></svg>
<svg class="a" style="left:725.6px;top:113.8px;" width="7" height="7.4" viewBox="0 0 7 7.4"><path d="M0.8 0.2V2.2M0.2 3.4H1.4L0.2 5H1.4M0.3 6.2H1.4" stroke="#5a5b61" stroke-width="0.55"/><path d="M2.6 1H6.8M2.6 3.7H6.8M2.6 6.4H6.8" stroke="#5a5b61" stroke-width="0.8"/></svg>
<svg class="a" style="left:740.6px;top:114.4px;" width="7" height="6" viewBox="0 0 7 6"><path d="M0.3 0.8H6.6M0.3 3H4.4M0.3 5.2H6.6" stroke="#5a5b61" stroke-width="0.9"/></svg>
<svg class="a" style="left:757.6px;top:113.6px;" width="7.6" height="7.6" viewBox="0 0 7.6 7.6"><rect x="0.4" y="0.4" width="6.8" height="6.8" fill="none" stroke="#77787e" stroke-width="0.6"/><path d="M0.4 2.7H7.2M0.4 4.9H7.2M2.7 0.4V7.2M4.9 0.4V7.2" stroke="#77787e" stroke-width="0.45"/></svg>
<svg class="a" style="left:773.8px;top:115.8px;" width="7.2" height="3.8" viewBox="0 0 7.2 3.8"><rect x="0.4" y="0.4" width="3.8" height="3" rx="1.5" fill="none" stroke="#5a5b61" stroke-width="0.75"/><rect x="3" y="0.4" width="3.8" height="3" rx="1.5" fill="none" stroke="#5a5b61" stroke-width="0.75"/></svg>
<svg class="a" style="left:787.8px;top:114px;" width="7.6" height="6.8" viewBox="0 0 7.6 6.8"><rect x="0.4" y="0.4" width="6.8" height="6" fill="none" stroke="#5a5b61" stroke-width="0.7"/><path d="M1.2 5.6L3 3.6 4.2 4.6 5 3.8 6.4 5.6Z" fill="#5a5b61"/><circle cx="5.2" cy="2" r="0.6" fill="#5a5b61"/></svg>
<svg class="a" style="left:802.2px;top:115px;" width="7.4" height="4.8" viewBox="0 0 7.4 4.8"><path d="M0.3 1.4L1.8 2.4 0.3 3.4Z" fill="#5a5b61"/><rect x="2.2" y="0.3" width="5" height="4.2" fill="#5a5b61"/></svg>
<svg class="a" style="left:819.8px;top:114.2px;" width="6" height="6" viewBox="0 0 6 6"><path d="M0.8 0.8L5.2 5.2M5.2 0.8L0.8 5.2" stroke="#5a5b61" stroke-width="0.7"/><path d="M0.2 0.2H2L0.2 2Z M5.8 0.2H4L5.8 2Z M0.2 5.8H2L0.2 4Z M5.8 5.8H4L5.8 4Z" fill="#5a5b61"/></svg>
<div class="t" style="left:831.80px;top:113.69px;font-size:7.0px;color:#66676d;font-weight:400;-webkit-text-stroke:0">&lt;/&gt;</div>
<div class="t" style="left:849px;top:113.6px;font-size:8.2px;font-weight:700;color:#55565c;-webkit-text-stroke:0">?</div>
<div class="a" style="left:578.9px;top:250.1px;width:422.6px;height:33.2px;border:1px dashed #dcdce0;border-radius:2px"></div>
<div class="t" style="left:755.40px;top:261.60px;font-size:7.9px;color:#55565e;font-weight:400;-webkit-text-stroke:0">Selecione o arquivo</div>
<div class="a" style="left:578.6px;top:290px;width:423px;height:0.8px;background:#e6e6ea"></div>
<div class="a" style="left:579px;top:298.20000000000005px;width:9px;height:8.8px;background:#e3e5ee;border-radius:1px"></div>
<div class="t" style="left:594.70px;top:298.99px;font-size:7.0px;color:#8a8b92;font-weight:400;-webkit-text-stroke:0.05px currentColor">Visível para o cliente</div>
<svg class="a" style="left:661.4px;top:299.3px;" width="5.8" height="5.8" viewBox="0 0 5.8 5.8"><circle cx="2.9" cy="2.9" r="2.9" fill="#35363b"/><text x="2.9" y="4.7" font-size="4.6" font-weight="700" text-anchor="middle" fill="#fff" font-family="Liberation Sans">?</text></svg>
<div class="a" style="left:579px;top:313.1px;width:9px;height:8.8px;background:#e3e5ee;border-radius:1px"></div>
<div class="t" style="left:594.70px;top:313.77px;font-size:7.27px;color:#8a8b92;font-weight:400;-webkit-text-stroke:0.05px currentColor">Aguardar retorno do cliente</div>
<svg class="a" style="left:683.7px;top:314.2px;" width="5.8" height="5.8" viewBox="0 0 5.8 5.8"><circle cx="2.9" cy="2.9" r="2.9" fill="#35363b"/><text x="2.9" y="4.7" font-size="4.6" font-weight="700" text-anchor="middle" fill="#fff" font-family="Liberation Sans">?</text></svg>
<div class="a" style="left:579px;top:328.0px;width:9px;height:8.8px;background:#e3e5ee;border-radius:1px"></div>
<div class="t" style="left:594.70px;top:328.66px;font-size:7.31px;color:#8a8b92;font-weight:400;-webkit-text-stroke:0.05px currentColor">Aguardando autorização para finalizar o atendimento</div>
<svg class="a" style="left:768.6px;top:329.09999999999997px;" width="5.8" height="5.8" viewBox="0 0 5.8 5.8"><circle cx="2.9" cy="2.9" r="2.9" fill="#35363b"/><text x="2.9" y="4.7" font-size="4.6" font-weight="700" text-anchor="middle" fill="#fff" font-family="Liberation Sans">?</text></svg>
<div class="a" style="left:579px;top:343.1px;width:9px;height:8.8px;background:#e3e5ee;border-radius:1px"></div>
<div class="t" style="left:594.70px;top:343.89px;font-size:7.0px;color:#8a8b92;font-weight:400;-webkit-text-stroke:0.05px currentColor">Enviar cópia</div>
<svg class="a" style="left:635.1px;top:344.2px;" width="5.8" height="5.8" viewBox="0 0 5.8 5.8"><circle cx="2.9" cy="2.9" r="2.9" fill="#35363b"/><text x="2.9" y="4.7" font-size="4.6" font-weight="700" text-anchor="middle" fill="#fff" font-family="Liberation Sans">?</text></svg>
<div class="t" style="left:578.60px;top:362.29px;font-size:7.7px;color:#3a3b42;font-weight:400;-webkit-text-stroke:0">Email</div>
<div class="a" style="left:578.6px;top:374.9px;width:423.1px;height:16.5px;background:#f3f3f6;border:1px solid #dcdde2;border-radius:2px"></div>
<div class="t" style="left:582.90px;top:380.04px;font-size:6.43px;color:#4a4b52;font-weight:400;-webkit-text-stroke:0">skyheart00190@gmail.com</div>
<div class="t" style="left:578.60px;top:393.97px;font-size:8.2px;color:#3a3b42;font-weight:400;-webkit-text-stroke:0">Midias</div>
<div class="a" style="left:578.6px;top:406px;width:423.3px;height:18px;background:#f3f4f7;border:1px solid #d2d3d8;border-radius:2px"></div>
<div class="t" style="left:585.00px;top:412.20px;font-size:6.5px;color:#303136;font-weight:400;-webkit-text-stroke:0">Email</div>
<svg class="a" style="left:992.6px;top:413.4px;" width="5.4" height="3.2" viewBox="0 0 5.4 3.2"><path d="M0.4 0.4L2.7 2.7 5 0.4" fill="none" stroke="#333" stroke-width="1.2"/></svg>
<div class="a" style="left:930.1px;top:432.7px;width:55.5px;height:17.2px;background:#3dbd9b;border-radius:2px"></div>
<svg class="a" style="left:937.6px;top:438.4px;" width="5.6" height="5.6" viewBox="0 0 5.6 5.6"><path d="M2.8 0.3V5.3M0.3 2.8H5.3" stroke="#fff" stroke-width="1.5"/></svg>
<div class="t" style="left:946.00px;top:438.20px;font-size:7.2px;color:#fff;font-weight:400;">Adicionar</div>
<div class="a" style="left:578.6px;top:464.2px;width:423px;height:0.8px;background:#e6e6ea"></div>
<div class="a" style="left:983.2px;top:485.6px;width:21.2px;height:21.2px;background:#fff;border-radius:50%;box-shadow:0 0 8px rgba(90,90,170,.12)"></div>
<svg class="a" style="left:990.3px;top:492.4px;" width="6" height="7.4" viewBox="0 0 6 7.4"><path d="M3 7V0.8M0.7 3L3 0.7 5.3 3" fill="none" stroke="#b4b6c6" stroke-width="0.9"/></svg>

<div class="a" style="left:105px;top:24px;width:910px;height:30px;background:#fff;box-shadow:0 3px 8px rgba(80,80,160,.09)"></div>
<div class="a" style="left:689px;top:33.8px;width:24.4px;height:11.8px;border-radius:6px;background:#f1506e"></div>
<div class="t" style="left:694.80px;top:36.99px;font-size:6.3px;color:#fff;font-weight:400;-webkit-text-stroke:0.05px currentColor">Chat</div>
<div class="a" style="left:715.7px;top:33.8px;width:20.2px;height:11.8px;border-radius:6px;background:#f1506e"></div>
<div class="t" style="left:720.60px;top:37.12px;font-size:6.0px;color:#fff;font-weight:400;-webkit-text-stroke:0.05px currentColor">Voz</div>
<svg class="a" style="left:748px;top:34.4px;" width="11" height="11" viewBox="0 0 11 11"><path d="M3.1 2.3A4.2 4.2 0 0 0 1.3 6.5M2.8 9.4A4.2 4.2 0 0 0 8.2 9.4M9.7 6.5A4.2 4.2 0 0 0 7.9 2.3" fill="none" stroke="#2b5bc4" stroke-width="1.25"/><circle cx="5.5" cy="1.5" r="1.2" fill="#2b5bc4"/><circle cx="1.4" cy="8.4" r="1.2" fill="#2b5bc4"/><circle cx="9.6" cy="8.4" r="1.2" fill="#2b5bc4"/></svg>
<svg class="a" style="left:782.8px;top:35.3px;" width="8.6" height="8.6" viewBox="0 0 8.6 8.6"><circle cx="2.6" cy="6" r="2" fill="none" stroke="#2b5bc4" stroke-width="1.3"/><circle cx="6" cy="2.6" r="2" fill="none" stroke="#2b5bc4" stroke-width="1.3"/><path d="M3.2 5.4L5.4 3.2" stroke="#2b5bc4" stroke-width="1.3"/></svg>
<svg class="a" style="left:815.4px;top:34.6px;" width="9.2" height="10.4" viewBox="0 0 9.2 10.4"><path d="M4.6 1.2C2.8 1.2 2 2.6 2 4.2V6.6L0.8 8.2H8.4L7.2 6.6V4.2C7.2 2.6 6.4 1.2 4.6 1.2Z" fill="none" stroke="#2b5bc4" stroke-width="1"/><circle cx="4.6" cy="0.9" r="0.8" fill="#2b5bc4"/><path d="M3.4 9.2Q4.6 10.6 5.8 9.2Z" fill="#2b5bc4" stroke="#2b5bc4" stroke-width="0.6"/></svg>
<svg class="a" style="left:846.5px;top:31.7px;" width="16" height="16" viewBox="0 0 16 16"><defs><clipPath id="av"><circle cx="8" cy="8" r="8"/></clipPath></defs><circle cx="8" cy="8" r="8" fill="#dfe3e7"/><g clip-path="url(#av)"><circle cx="8" cy="6.4" r="2.7" fill="#fff"/><ellipse cx="8" cy="14.6" rx="5.6" ry="3.6" fill="#fff"/></g></svg>
<svg class="a" style="left:881.6px;top:34.6px;" width="9.6" height="10.2" viewBox="0 0 9.6 10.2"><path d="M4.8 0.2L9.4 1.8 4.8 3.4 0.2 1.8Z" fill="#1d4fb8"/><path d="M0.8 1.8V4.2" stroke="#1d4fb8" stroke-width="0.7"/><path d="M2.4 2.6V4.6Q4.8 6.4 7.2 4.6V2.6L4.8 3.4Z" fill="#1d4fb8"/><path d="M0.6 10.2Q0.6 6.6 3.2 6.6L4.8 8.4 6.4 6.6Q9 6.6 9 10.2Z" fill="#1d4fb8"/></svg>
<svg class="a" style="left:910.8px;top:32.8px;" width="11.8" height="13" viewBox="0 0 11.8 13"><defs><clipPath id="us"><path d="M5.9 0.3C9.2 0.3 11.6 2.5 11.6 5.7 11.6 8.9 9.2 11 6.9 11.3L5.9 12.8 4.9 11.3C2.6 11 0.2 8.9 0.2 5.7 0.2 2.5 2.6 0.3 5.9 0.3Z"/></clipPath></defs><g clip-path="url(#us)"><rect width="12" height="13" fill="#f7f0f2"/><rect y="0.3" width="12" height="1.1" fill="#e8556a"/><rect y="2.4" width="12" height="1.1" fill="#e8556a"/><rect y="4.5" width="12" height="1.1" fill="#e8556a"/><rect y="6.6" width="12" height="1.1" fill="#e8556a"/><rect y="8.7" width="12" height="1.1" fill="#e8556a"/><rect y="10.8" width="12" height="2.2" fill="#e8556a"/><rect width="5.6" height="5.6" fill="#5a67b0"/></g></svg>
<svg class="a" style="left:928.5px;top:32.8px;" width="11.8" height="12.6" viewBox="0 0 11.8 12.6"><path d="M5.9 0.2L11.4 3.3V9.3L5.9 12.4 0.4 9.3V3.3Z" fill="#65a83a"/><path d="M5.9 2.9L10 6.3 5.9 9.7 1.8 6.3Z" fill="#f1e23a"/><circle cx="5.9" cy="6.3" r="2" fill="#3b50a0"/></svg>
<div class="t" style="left:971.60px;top:37.59px;font-size:5.6px;color:#4a4a4a;font-weight:700;">SAIR</div>
<div class="a" style="left:1015px;top:24px;width:9px;height:507px;background:#f1f1f1"></div>
<svg class="a" style="left:1017px;top:27.5px;" width="5" height="4" viewBox="0 0 5 4"><path d="M2.5 0.3L4.8 3.5H0.2Z" fill="#505050"/></svg>
<div class="a" style="left:1016px;top:177px;width:7px;height:343.5px;background:#c1c1c1"></div>
<svg class="a" style="left:1017px;top:523.5px;" width="5" height="4" viewBox="0 0 5 4"><path d="M2.5 3.7L4.8 0.5H0.2Z" fill="#505050"/></svg>

</body></html>
